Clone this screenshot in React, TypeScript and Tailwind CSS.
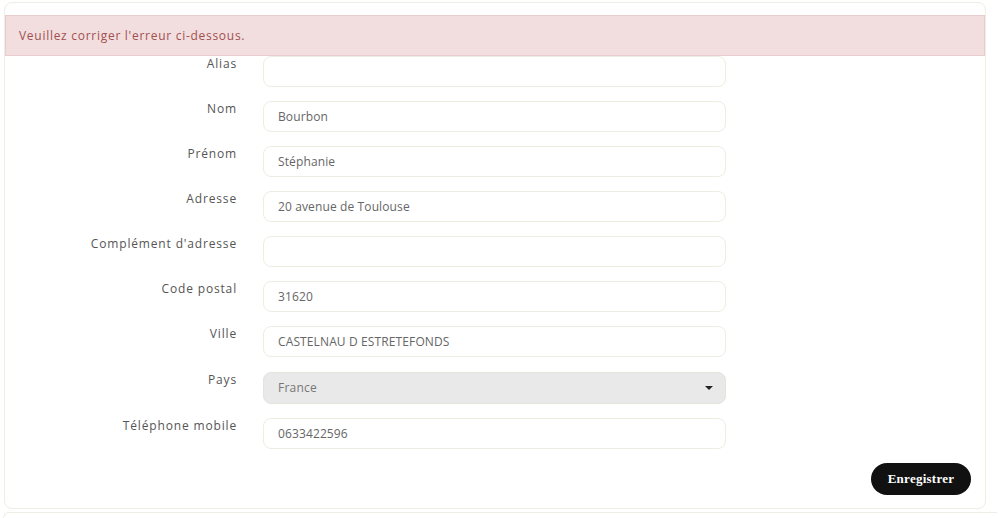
import React from "react";

const font = { fontFamily: '"Open Sans", "Liberation Sans", sans-serif' };

interface RowProps {
  label: string;
  value?: string;
  select?: boolean;
}

const Row: React.FC<RowProps> = ({ label, value = "", select = false }) => (
  <div className="flex items-start h-[45px]">
    <label className="w-[232px] shrink-0 text-right text-[12px] tracking-[0.07em] text-[#555] pt-[1px] leading-[14px]">
      {label}
    </label>
    <div className="ml-[26px] w-[463px]">
      {select ? (
        <div className="h-[32px] rounded-[8px] bg-[#e9e9e9] border border-[#e6e3da] flex items-center justify-between pl-[14px] pr-[12px] text-[12px] tracking-[0.02em] text-[#777]">
          <span>{value}</span>
          <span className="w-0 h-0 border-l-[4px] border-r-[4px] border-t-[4px] border-l-transparent border-r-transparent border-t-[#222]" />
        </div>
      ) : (
        <input
          readOnly
          value={value}
          className="w-full h-[31px] rounded-[8px] bg-white border border-[#efece2] px-[14px] text-[12px] tracking-[0.01em] text-[#666] outline-none"
          style={font}
        />
      )}
    </div>
  </div>
);

export default function App() {
  return (
    <div className="w-[1000px] h-[518px] bg-white overflow-hidden" style={font}>
      <div className="mx-[4px] mt-[2px] w-[982px] h-[507px] border border-[#f0ede5] rounded-[8px] pt-[12px] flex flex-col">
        <div className="h-[41px] bg-[#f2dede] border border-[#ebcccc] flex items-center pl-[13px] text-[12px] tracking-[0.06em] text-[#a15050]">
          Veuillez corriger l'erreur ci-dessous.
        </div>
        <div className="flex flex-col">
          <Row label="Alias" />
          <Row label="Nom" value="Bourbon" />
          <Row label="Prénom" value="Stéphanie" />
          <Row label="Adresse" value="20 avenue de Toulouse" />
          <Row label="Complément d'adresse" />
          <Row label="Code postal" value="31620" />
          <Row label="Ville" value="CASTELNAU D ESTRETEFONDS" />
          <div className="h-[1px]" />
          <Row label="Pays" value="France" select />
          <div className="h-[1px]" />
          <Row label="Téléphone mobile" value="0633422596" />
        </div>
        <div className="flex justify-end pr-[14px]">
          <button
            className="h-[32px] w-[100px] rounded-full bg-[#111] text-white text-[13px] font-bold tracking-[0.02em]"
            style={{ fontFamily: '"Liberation Serif", "DejaVu Serif", serif' }}
          >
            Enregistrer
          </button>
        </div>
      </div>
      <div className="mx-[3px] mt-[3px] h-[20px] border-l border-t border-[#f0ede5] rounded-tl-[6px]" />
    </div>
  );
}
